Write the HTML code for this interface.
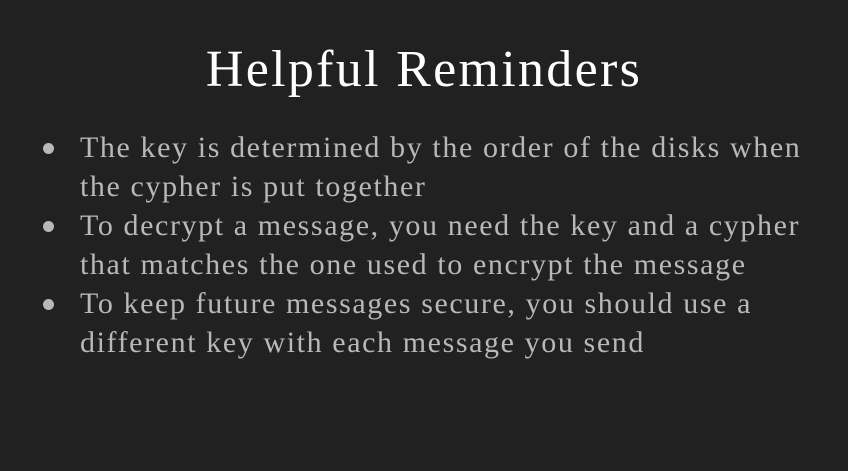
<!DOCTYPE html>
<html><head><meta charset="utf-8"><style>
html,body{margin:0;padding:0;width:848px;height:471px;background:#212121;overflow:hidden}
body{position:relative;font-family:"Liberation Serif",serif}
.t{position:absolute;left:0;width:848px;text-align:center;top:40px;font-size:52px;color:#fff;letter-spacing:2.3px;white-space:nowrap}
.l{position:absolute;left:80px;font-size:30px;color:#b8b8b8;letter-spacing:1.6px;white-space:nowrap;line-height:34px}
.b{position:absolute;left:43px;width:11px;height:11px;border-radius:50%;background:#b8b8b8}
</style></head><body>
<div class="t">Helpful Reminders</div>
<div class="b" style="top:143px"></div>
<div class="l" style="top:131px">The key is determined by the order of the disks when</div>
<div class="l" style="top:170px">the cypher is put together</div>
<div class="b" style="top:221px"></div>
<div class="l" style="top:209px">To decrypt a message, you need the key and a cypher</div>
<div class="l" style="top:248px">that matches the one used to encrypt the message</div>
<div class="b" style="top:299px"></div>
<div class="l" style="top:287px">To keep future messages secure, you should use a</div>
<div class="l" style="top:326px">different key with each message you send</div>
</body></html>
